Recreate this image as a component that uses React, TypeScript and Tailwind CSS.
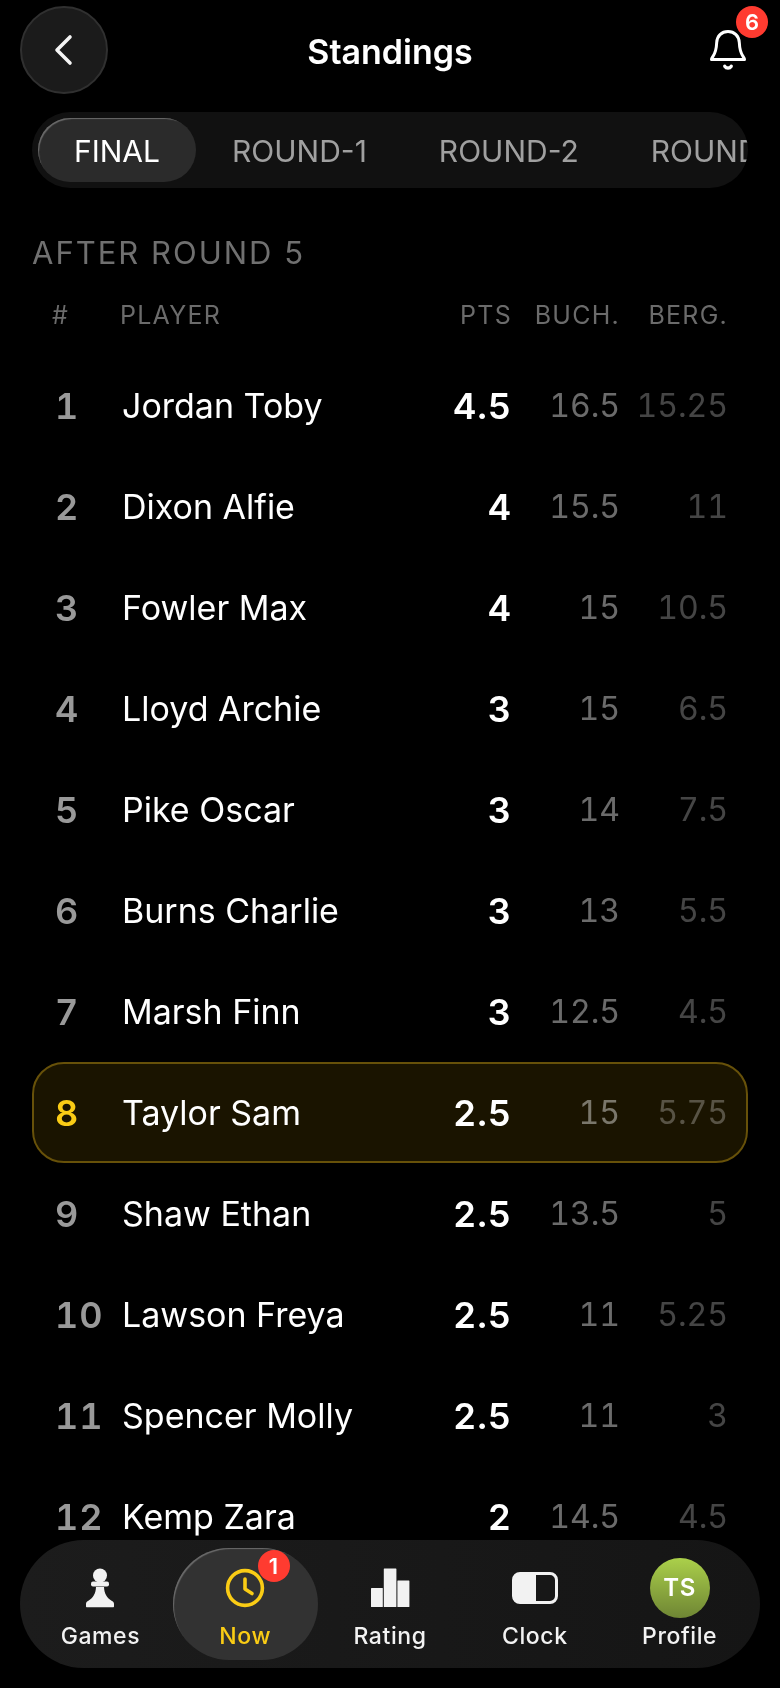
import { useState } from 'react';
import clsx from 'clsx';

type Player = {
  rank: number;
  name: string;
  pts: string;
  buch: string;
  berg: string;
  me?: boolean;
};

const ROUNDS = ['FINAL', 'ROUND-1', 'ROUND-2', 'ROUND-3'];

const PLAYERS: Player[] = [
  { rank: 1, name: 'Jordan Toby', pts: '4.5', buch: '16.5', berg: '15.25' },
  { rank: 2, name: 'Dixon Alfie', pts: '4', buch: '15.5', berg: '11' },
  { rank: 3, name: 'Fowler Max', pts: '4', buch: '15', berg: '10.5' },
  { rank: 4, name: 'Lloyd Archie', pts: '3', buch: '15', berg: '6.5' },
  { rank: 5, name: 'Pike Oscar', pts: '3', buch: '14', berg: '7.5' },
  { rank: 6, name: 'Burns Charlie', pts: '3', buch: '13', berg: '5.5' },
  { rank: 7, name: 'Marsh Finn', pts: '3', buch: '12.5', berg: '4.5' },
  { rank: 8, name: 'Taylor Sam', pts: '2.5', buch: '15', berg: '5.75', me: true },
  { rank: 9, name: 'Shaw Ethan', pts: '2.5', buch: '13.5', berg: '5' },
  { rank: 10, name: 'Lawson Freya', pts: '2.5', buch: '11', berg: '5.25' },
  { rank: 11, name: 'Spencer Molly', pts: '2.5', buch: '11', berg: '3' },
  { rank: 12, name: 'Kemp Zara', pts: '2', buch: '14.5', berg: '4.5' },
];

function BackIcon() {
  return (
    <svg width="20" height="32" viewBox="0 0 20 32" fill="none" stroke="#f5f5f5" strokeWidth="3.6" strokeLinecap="round" strokeLinejoin="round" aria-hidden="true">
      <path d="M16 3 3 16l13 13" />
    </svg>
  );
}

function BellIcon() {
  return (
    <svg width="36" height="40" viewBox="0 0 36 40" fill="none" stroke="#fff" strokeWidth="3" strokeLinecap="round" strokeLinejoin="round" aria-hidden="true">
      <path d="M18 1.5C11.500 1.500 7 6 6.700 12.500C6.400 19.500 5.600 22.500 3 26.300C1.900 28 1.500 28.600 1.500 29.500H34.500C34.500 28.600 34.100 28 33 26.300C30.400 22.500 29.600 19.500 29.300 12.500C29 6 24.500 1.500 18 1.500Z" />
      <path d="M14.800 36.300a3.800 3.800 0 0 0 6.400 0" strokeWidth="3.4" />
    </svg>
  );
}

function PawnIcon() {
  return (
    <svg width="28" height="40" viewBox="0 0 28 40" fill="#f2f2f2" aria-hidden="true">
      <circle cx="14" cy="7.500" r="7" />
      <rect x="5" y="13.500" width="18" height="5" rx="2" />
      <path d="M10 19h8c.2 6.500 2.800 11 8 14 1.400.8 2 1.600 2 3v2.200c0 .7-.3 1-1 1H1c-.7 0-1-.3-1-1V36c0-1.400.6-2.200 2-3 5.200-3 7.800-7.500 8-14Z" />
    </svg>
  );
}

function NowIcon() {
  return (
    <svg width="40" height="40" viewBox="0 0 40 40" fill="none" stroke="#facc15" strokeWidth="3.6" strokeLinecap="round" strokeLinejoin="round" aria-hidden="true">
      <circle cx="20" cy="20" r="17.400" />
      <path d="M20 11v10l7 4.500" />
    </svg>
  );
}

function RatingIcon() {
  return (
    <svg width="40" height="40" viewBox="0 0 40 40" fill="#f2f2f2" aria-hidden="true">
      <rect x="1" y="20" width="11.800" height="19" rx="0.500" />
      <rect x="13.800" y="0.500" width="12.600" height="38.500" rx="0.500" />
      <rect x="27.400" y="12.500" width="12" height="26.500" rx="0.500" />
    </svg>
  );
}

function ClockIcon() {
  return (
    <svg width="46" height="32" viewBox="0 0 46 32" aria-hidden="true">
      <path d="M8 1h16v30H8a7 7 0 0 1-7-7V8a7 7 0 0 1 7-7Z" fill="#f2f2f2" />
      <rect x="1.500" y="1.500" width="43" height="29" rx="6.500" fill="none" stroke="#f2f2f2" strokeWidth="3" />
    </svg>
  );
}

function Avatar() {
  return (
    <span className="flex size-[60px] items-center justify-center rounded-full bg-linear-to-b from-[#abd04a] to-[#6f8634] text-2xl font-semibold tracking-wide text-white">
      TS
    </span>
  );
}

const NAV = [
  { label: 'Games', icon: <PawnIcon /> },
  { label: 'Now', icon: <NowIcon />, badge: 1 },
  { label: 'Rating', icon: <RatingIcon /> },
  { label: 'Clock', icon: <ClockIcon /> },
  { label: 'Profile', icon: <Avatar /> },
];

function Badge({ count, className }: { count: number; className: string }) {
  return (
    <span className={clsx('absolute flex size-8 items-center justify-center rounded-full bg-[#ff3b30] text-[22px] font-semibold text-white', className)}>
      {count}
    </span>
  );
}

const GRID = 'grid grid-cols-[68px_1fr_100px_108px_108px] items-center px-[18px] border-2';

export default function App() {
  const [round, setRound] = useState('FINAL');

  return (
    <div className="min-h-screen bg-black pb-[116px] font-[Inter,'Noto_Sans',sans-serif] text-white">
      <header className="grid h-[100px] grid-cols-[88px_1fr_88px] items-center px-5">
        <button type="button" aria-label="Back" className="flex size-[88px] items-center justify-center rounded-full border-2 border-[#303030] bg-[#1b1b1b]">
          <BackIcon />
        </button>
        <h1 className="pt-0.5 text-center text-[34px] font-semibold">Standings</h1>
        <button type="button" aria-label="Notifications" className="relative flex h-[88px] items-center justify-end pr-3.5">
          <BellIcon />
          <Badge count={6} className="top-0 -right-2" />
        </button>
      </header>

      <main className="px-8">
        {/* round switcher, scrolls sideways */}
        <div role="tablist" className="mt-3 flex h-[76px] items-center overflow-x-auto rounded-full bg-[#111] px-1.5 [scrollbar-width:none]">
          {ROUNDS.map((r) => (
            <button
              key={r}
              type="button"
              role="tab"
              aria-selected={r === round}
              onClick={() => setRound(r)}
              className={clsx(
                'h-16 shrink-0 rounded-full px-9 pt-0.5 text-[30px]',
                r === round
                  ? 'bg-[#2b2b2b] text-white shadow-[inset_2px_2px_1px_-1px_#6b6b6b]'
                  : 'text-[#a0a0a0]',
              )}
            >
              {r}
            </button>
          ))}
        </div>

        <h2 className="mt-[45px] text-[31px] leading-10 tracking-[2px] text-[#707070]">AFTER ROUND 5</h2>

        <table className="mt-5 block w-full">
          <thead className="block">
            <tr className={clsx(GRID, 'h-[62px] border-transparent pb-4 text-[25px] tracking-wider text-[#6b6b6b]')}>
              <th scope="col" className="text-left font-normal">#</th>
              <th scope="col" className="text-left font-normal">PLAYER</th>
              <th scope="col" className="text-right font-normal">PTS</th>
              <th scope="col" className="text-right font-normal">BUCH.</th>
              <th scope="col" className="text-right font-normal">BERG.</th>
            </tr>
          </thead>
          <tbody className="block">
            {PLAYERS.map((p) => (
              <tr
                key={p.rank}
                className={clsx(GRID, 'h-[101px]', p.me ? 'rounded-[32px] border-[#675109] bg-[#1a1400]' : 'border-transparent')}
              >
                <td className={clsx('pl-[3px] text-4xl font-semibold tracking-wide tabular-nums', p.me ? 'text-[#facc15]' : 'text-[#999]')}>{p.rank}</td>
                <td className="truncate pl-0.5 text-[34px] leading-[44px]">{p.name}</td>
                <td className="text-right text-4xl font-semibold tracking-wide tabular-nums">{p.pts}</td>
                <td className="text-right text-[32px] text-white/42 tabular-nums">{p.buch}</td>
                <td className="text-right text-[32px] text-white/27 tabular-nums">{p.berg}</td>
              </tr>
            ))}
          </tbody>
        </table>
      </main>

      <nav className="fixed inset-x-5 bottom-5 grid grid-cols-5 rounded-full bg-linear-to-r from-[#1c1c1c] to-[#151515] p-2">
        {NAV.map((item) => {
          const active = item.label === 'Now';
          return (
            <a
              key={item.label}
              href={`#${item.label.toLowerCase()}`}
              aria-current={active ? 'page' : undefined}
              className={clsx(
                'relative flex h-28 flex-col items-center rounded-full pt-2.5 text-[23px] leading-9 font-medium tracking-wide',
                active ? 'bg-[#323232] text-[#facc15] shadow-[inset_2px_2px_1px_-1px_#6b6b6b]' : 'text-[#f2f2f2]',
              )}
            >
              <span className="flex h-[60px] items-center">{item.icon}</span>
              {item.label}
              {item.badge && <Badge count={item.badge} className="top-0.5 right-7" />}
            </a>
          );
        })}
      </nav>
    </div>
  );
}
